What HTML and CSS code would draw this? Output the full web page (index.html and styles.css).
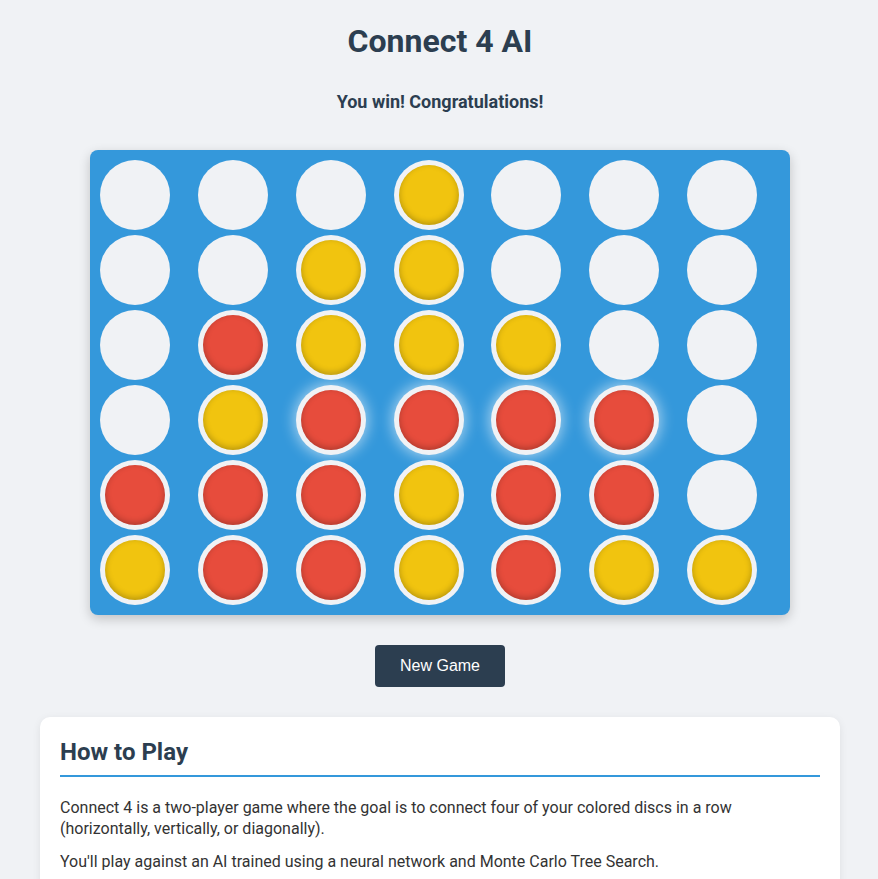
FILE: index.html
```html
<!DOCTYPE html>
<html lang="en">
<head>
<meta charset="utf-8">
<title>Connect 4 AI</title>
<link rel="stylesheet" href="styles.css">
</head>
<body>
<div class="container">
  <h1 class="title">Connect 4 AI</h1>
  <div class="status">You win! Congratulations!</div>
  <div class="board">
    <div class="cell"></div><div class="cell"></div><div class="cell"></div><div class="cell"><div class="piece yellow"></div></div><div class="cell"></div><div class="cell"></div><div class="cell"></div>
    <div class="cell"></div><div class="cell"></div><div class="cell"><div class="piece yellow"></div></div><div class="cell"><div class="piece yellow"></div></div><div class="cell"></div><div class="cell"></div><div class="cell"></div>
    <div class="cell"></div><div class="cell"><div class="piece red"></div></div><div class="cell"><div class="piece yellow"></div></div><div class="cell"><div class="piece yellow"></div></div><div class="cell"><div class="piece yellow"></div></div><div class="cell"></div><div class="cell"></div>
    <div class="cell"></div><div class="cell"><div class="piece yellow"></div></div><div class="cell win"><div class="piece red"></div></div><div class="cell win"><div class="piece red"></div></div><div class="cell win"><div class="piece red"></div></div><div class="cell win"><div class="piece red"></div></div><div class="cell"></div>
    <div class="cell"><div class="piece red"></div></div><div class="cell"><div class="piece red"></div></div><div class="cell"><div class="piece red"></div></div><div class="cell"><div class="piece yellow"></div></div><div class="cell"><div class="piece red"></div></div><div class="cell"><div class="piece red"></div></div><div class="cell"></div>
    <div class="cell"><div class="piece yellow"></div></div><div class="cell"><div class="piece red"></div></div><div class="cell"><div class="piece red"></div></div><div class="cell"><div class="piece yellow"></div></div><div class="cell"><div class="piece red"></div></div><div class="cell"><div class="piece yellow"></div></div><div class="cell"><div class="piece yellow"></div></div>
  </div>
  <div class="controls">
    <button class="btn">New Game</button>
  </div>
  <section class="card">
    <h2 class="card-title">How to Play</h2>
    <p>Connect 4 is a two-player game where the goal is to connect four of your colored discs in a row (horizontally, vertically, or diagonally).</p>
    <p>You'll play against an AI trained using a neural network and Monte Carlo Tree Search.</p>
    <p>Click on a column to drop your disc. The disc will fall to the lowest available position in that column.</p>
  </section>
</div>
</body>
</html>
```
FILE: styles.css
```css
* { box-sizing: border-box; }
body {
  margin: 0;
  padding: 20px 20px 20px 22px;
  background: #f0f2f5;
  font-family: Roboto, "Liberation Sans", Arial, sans-serif;
  color: #333;
}
.container {
  max-width: 800px;
  margin: 0 auto;
  display: flex;
  flex-direction: column;
  align-items: center;
}
.title {
  margin: 0;
  padding-top: 1px;
  font-size: 32px;
  font-weight: 700;
  color: #2c3e50;
  line-height: 40px;
}
.status {
  margin-top: 30px;
  font-size: 18px;
  font-weight: 700;
  color: #2c3e50;
  line-height: 22px;
}
.board {
  margin-top: 37px;
  width: 700px;
  padding: 10px;
  background: #3498db;
  border-radius: 8px;
  display: grid;
  grid-template-columns: repeat(7, 1fr);
  gap: 5px;
  box-shadow: 0 4px 12px rgba(0, 0, 0, 0.2);
}
.cell {
  width: 70px;
  height: 70px;
  border-radius: 50%;
  background: #f0f2f5;
  display: flex;
  align-items: center;
  justify-content: center;
}
.cell.win {
  box-shadow: 0 0 14px 2px rgba(255, 255, 255, 0.55);
}
.piece {
  width: 60px;
  height: 60px;
  border-radius: 50%;
  box-shadow: inset 0 -2px 6px rgba(0, 0, 0, 0.25);
}
.piece.red { background: #e74c3c; }
.piece.yellow { background: #f1c40f; }
.controls {
  margin-top: 30px;
}
.btn {
  background: #2c3e50;
  color: #fff;
  border: none;
  border-radius: 4px;
  padding: 12px 24.5px;
  font-family: "Liberation Sans", Arial, sans-serif;
  font-size: 16px;
  cursor: pointer;
}
.card {
  margin-top: 30px;
  width: 800px;
  background: #fff;
  border-radius: 10px;
  padding: 20px;
  box-shadow: 0 2px 8px rgba(0, 0, 0, 0.08);
}
.card-title {
  margin: 0 0 20px;
  font-size: 24px;
  font-weight: 700;
  color: #2c3e50;
  line-height: 30px;
  padding-bottom: 8px;
  border-bottom: 2px solid #3498db;
}
.card p {
  margin: 0 0 12px;
  font-size: 16px;
  line-height: 21px;
}
```
